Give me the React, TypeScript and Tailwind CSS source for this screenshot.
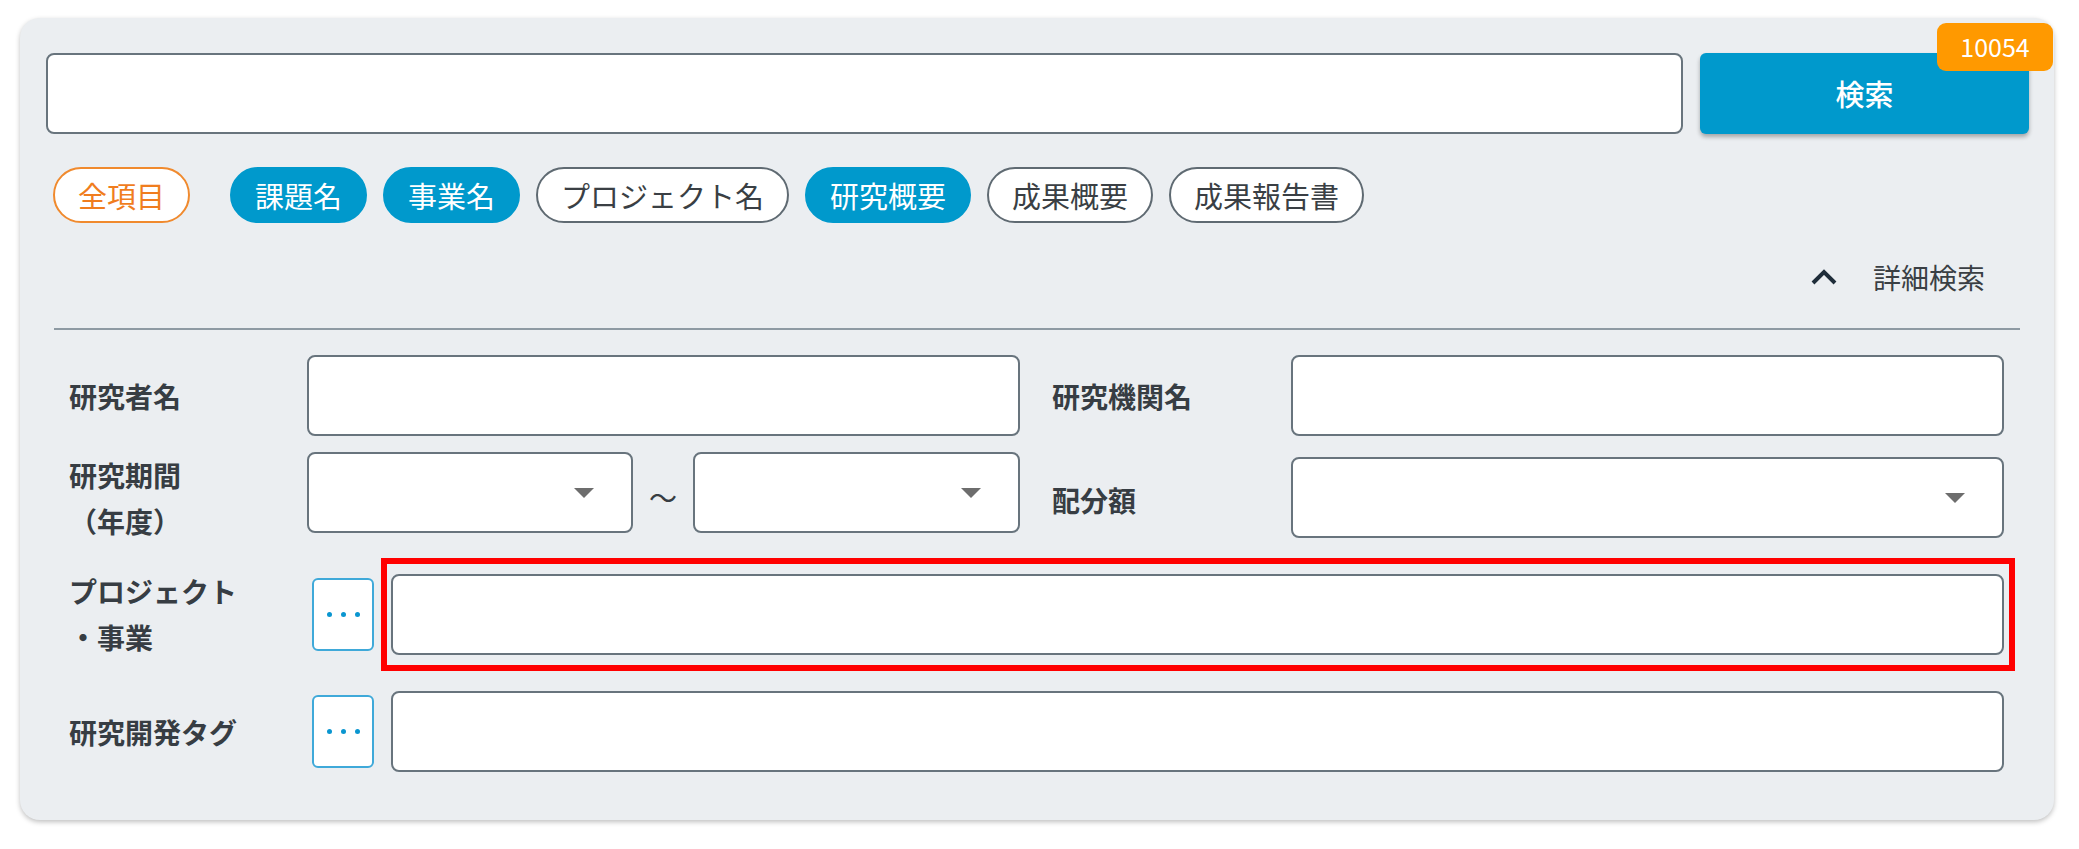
import React from "react";

const CHIPS = [
  { label: "全項目", kind: "all" as const },
  { label: "課題名", kind: "on" as const },
  { label: "事業名", kind: "on" as const },
  { label: "プロジェクト名", kind: "off" as const },
  { label: "研究概要", kind: "on" as const },
  { label: "成果概要", kind: "off" as const },
  { label: "成果報告書", kind: "off" as const },
];

function Chip({ label, kind }: { label: string; kind: "all" | "on" | "off" }) {
  const tone =
    kind === "all"
      ? "bg-white border-[#f08a2e] text-[#f07d1e] mr-[24px]"
      : kind === "on"
        ? "bg-[#0099cc] border-[#0099cc] text-white"
        : "bg-white border-[#5f6a72] text-[#3a3f44]";
  return (
    <button
      className={`h-[56px] px-[23px] border-2 rounded-full text-[29px] leading-none flex items-center ${tone}`}
    >
      {label}
    </button>
  );
}

function Label({ children, right = false, className = "" }: { children: React.ReactNode; right?: boolean; className?: string }) {
  return (
    <div
      className={`shrink-0 text-[28px] leading-[46px] font-bold text-[#373d43] ${
        right ? "ml-[32px] w-[239px]" : "w-[261px] pl-[23px]"
      } ${className}`}
    >
      {children}
    </div>
  );
}

function TextBox({ className = "" }: { className?: string }) {
  return (
    <input
      className={`h-[81px] rounded-[8px] border-2 border-[#68747d] bg-white outline-none ${className}`}
    />
  );
}

function SelectBox({ className = "" }: { className?: string }) {
  return (
    <div
      className={`relative h-[81px] rounded-[8px] border-2 border-[#68747d] bg-white flex items-center justify-end pr-[37px] ${className}`}
    >
      <svg width="20" height="10" viewBox="0 0 20 10">
        <path d="M0 0 H20 L10 10 Z" fill="#6d6d6d" />
      </svg>
    </div>
  );
}

function DotsButton() {
  return (
    <button className="ml-[5px] w-[62px] h-[73px] shrink-0 rounded-[6px] border-2 border-[#3fa9d9] bg-white flex items-center justify-center gap-[9px]">
      <span className="w-[5px] h-[5px] rounded-full bg-[#0a96d0]" />
      <span className="w-[5px] h-[5px] rounded-full bg-[#0a96d0]" />
      <span className="w-[5px] h-[5px] rounded-full bg-[#0a96d0]" />
    </button>
  );
}

export default function App() {
  return (
    <div className="min-h-[849px] bg-white pt-[18px] pl-[20px] font-['Noto_Sans_CJK_JP',sans-serif]">
      <div className="relative w-[2034px] h-[802px] rounded-[20px] bg-[#ebeef1] shadow-[0_2px_5px_rgba(0,0,0,0.25)] pt-[35px] pl-[26px] pr-[25px]">
        {/* result count badge */}
        <span className="absolute right-[1px] top-[5px] w-[116px] h-[48px] rounded-[9px] bg-[#ff9900] text-white text-[25px] flex items-center justify-center">
          10054
        </span>

        {/* keyword search */}
        <div className="flex gap-[17px]">
          <TextBox className="w-[1637px]" />
          <button className="h-[81px] w-[329px] rounded-[6px] bg-[#0099cc] text-white text-[29px] font-medium shadow-[0_3px_4px_rgba(0,0,0,0.3)]">
            検索
          </button>
        </div>

        {/* target fields */}
        <div className="mt-[33px] ml-[7px] flex gap-[16px]">
          {CHIPS.map((c) => (
            <Chip key={c.label} label={c.label} kind={c.kind} />
          ))}
        </div>

        {/* detail toggle */}
        <div className="mt-[34px] h-[40px] flex items-center justify-end pr-[44px] gap-[36px]">
          <svg width="26" height="16" viewBox="0 0 26 16">
            <path d="M2 14 L13 3 L24 14" fill="none" stroke="#1f2d3a" strokeWidth="4" />
          </svg>
          <span className="text-[28px] text-[#3a3f44]">詳細検索</span>
        </div>

        <div className="mt-[31px] ml-[8px] mr-[9px] h-[2px] bg-[#8e9aa3]" />

        {/* row 1 */}
        <div className="mt-[25px] flex items-center">
          <Label>研究者名</Label>
          <TextBox className="w-[713px]" />
          <Label right>研究機関名</Label>
          <TextBox className="w-[713px]" />
        </div>

        {/* row 2 */}
        <div className="mt-[16px] flex items-start h-[92px]">
          <Label>
            研究期間
            <br />
            （年度）
          </Label>
          <SelectBox className="w-[326px]" />
          <span className="w-[60px] pt-[24px] text-center text-[28px] text-[#373d43]">～</span>
          <SelectBox className="w-[327px]" />
          <Label right className="mt-[25px]">配分額</Label>
          <SelectBox className="w-[713px] mt-[5px]" />
        </div>

        {/* row 3 */}
        <div className="mt-[24px] flex items-center">
          <Label>
            プロジェクト
            <br />
            ・事業
          </Label>
          <DotsButton />
          <div className="relative ml-[17px]">
            <TextBox className="w-[1613px] block" />
            <div className="absolute -left-[10px] -right-[11px] -top-[16px] -bottom-[16px] border-[6px] border-[#ff0000] pointer-events-none" />
          </div>
        </div>

        {/* row 4 */}
        <div className="mt-[31px] flex items-center">
          <Label>研究開発タグ</Label>
          <DotsButton />
          <TextBox className="ml-[17px] w-[1613px] h-[80px]" />
        </div>
      </div>
    </div>
  );
}
